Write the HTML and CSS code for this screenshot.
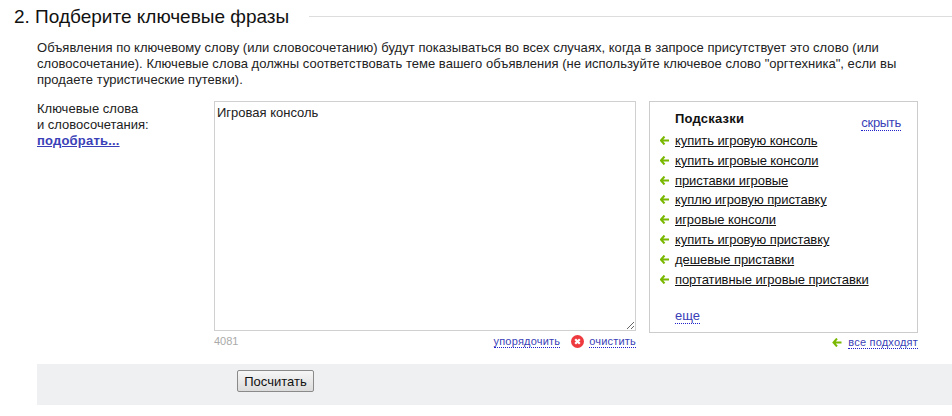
FILE: index.html
```html
<!DOCTYPE html>
<html lang="ru">
<head>
<meta charset="utf-8">
<title>Подберите ключевые фразы</title>
<link rel="stylesheet" href="styles.css">
</head>
<body>
<div class="head">
  <h2 class="title">2. Подберите ключевые фразы</h2>
  <div class="rule"></div>
</div>
<p class="intro">Объявления по ключевому слову (или словосочетанию) будут показываться во всех случаях, когда в запросе присутствует это слово (или словосочетание). Ключевые слова должны соответствовать теме вашего объявления (не используйте ключевое слово "оргтехника", если вы продаете туристические путевки).</p>
<div class="form">
  <div class="label">
    <div>Ключевые слова</div>
    <div>и словосочетания:</div>
    <a class="pick" href="#">подобрать...</a>
  </div>
  <div class="editor">
    <textarea class="area">Игровая консоль</textarea>
    <div class="tools">
      <span class="count">4081</span>
      <a class="dot small" href="#">упорядочить</a>
      <svg class="clear-icon" width="13" height="13" viewBox="0 0 13 13"><circle cx="6.5" cy="6.5" r="6.5" fill="#ee3a3f"/><path d="M4.2 4.2l4.6 4.6M8.8 4.2l-4.6 4.6" stroke="#fff" stroke-width="2.2"/></svg>
      <a class="dot small" href="#">очистить</a>
    </div>
  </div>
  <div class="side">
    <div class="panel">
      <div class="panel-head">
        <b class="panel-title">Подсказки</b>
        <a class="dot hide" href="#">скрыть</a>
      </div>
      <ul class="hints">
        <li><svg class="arrow" width="9" height="9" viewBox="0 0 9 9"><path d="M4.5 0.5L1 4.5l3.5 4M1.5 4.5H9" fill="none" stroke="#7ab800" stroke-width="2"/></svg><a href="#">купить игровую консоль</a></li>
        <li><svg class="arrow" width="9" height="9" viewBox="0 0 9 9"><path d="M4.5 0.5L1 4.5l3.5 4M1.5 4.5H9" fill="none" stroke="#7ab800" stroke-width="2"/></svg><a href="#">купить игровые консоли</a></li>
        <li><svg class="arrow" width="9" height="9" viewBox="0 0 9 9"><path d="M4.5 0.5L1 4.5l3.5 4M1.5 4.5H9" fill="none" stroke="#7ab800" stroke-width="2"/></svg><a href="#">приставки игровые</a></li>
        <li><svg class="arrow" width="9" height="9" viewBox="0 0 9 9"><path d="M4.5 0.5L1 4.5l3.5 4M1.5 4.5H9" fill="none" stroke="#7ab800" stroke-width="2"/></svg><a href="#">куплю игровую приставку</a></li>
        <li><svg class="arrow" width="9" height="9" viewBox="0 0 9 9"><path d="M4.5 0.5L1 4.5l3.5 4M1.5 4.5H9" fill="none" stroke="#7ab800" stroke-width="2"/></svg><a href="#">игровые консоли</a></li>
        <li><svg class="arrow" width="9" height="9" viewBox="0 0 9 9"><path d="M4.5 0.5L1 4.5l3.5 4M1.5 4.5H9" fill="none" stroke="#7ab800" stroke-width="2"/></svg><a href="#">купить игровую приставку</a></li>
        <li><svg class="arrow" width="9" height="9" viewBox="0 0 9 9"><path d="M4.5 0.5L1 4.5l3.5 4M1.5 4.5H9" fill="none" stroke="#7ab800" stroke-width="2"/></svg><a href="#">дешевые приставки</a></li>
        <li><svg class="arrow" width="9" height="9" viewBox="0 0 9 9"><path d="M4.5 0.5L1 4.5l3.5 4M1.5 4.5H9" fill="none" stroke="#7ab800" stroke-width="2"/></svg><a href="#">портативные игровые приставки</a></li>
      </ul>
      <a class="dot more" href="#">еще</a>
    </div>
    <div class="all">
      <svg class="arrow" width="10" height="9" viewBox="0 0 9 9"><path d="M4.5 0.5L1 4.5l3.5 4M1.5 4.5H9" fill="none" stroke="#7ab800" stroke-width="2"/></svg>
      <a class="dot small" href="#">все подходят</a>
    </div>
  </div>
</div>
<div class="bar">
  <button class="calc" type="button">Посчитать</button>
</div>
</body>
</html>
```
FILE: styles.css
```css
* { box-sizing: border-box; }
html, body { margin: 0; padding: 0; background: #fff; }
body {
  width: 952px;
  height: 416px;
  overflow: hidden;
  font-family: "Liberation Sans", Arial, sans-serif;
  font-size: 13px;
  color: #222;
}
.head { display: flex; align-items: center; height: 34px; padding-left: 14px; }
.title { margin: 0; font-size: 19px; font-weight: normal; color: #111; line-height: 34px; white-space: nowrap; }
.rule { flex: 1; height: 1px; margin: -2px 0 0 20px; background: #ddd; }
.intro { margin: 6px 0 0 37px; width: 890px; line-height: 16px; height: 48px; letter-spacing: 0.03px; }
.form { display: flex; margin: 13px 0 0 37px; }
.label { width: 177px; line-height: 16px; }
.pick { font-weight: bold; color: #3a3fb8; letter-spacing: 0.2px; }
.editor { width: 422px; }
.area {
  display: block;
  width: 422px;
  height: 230px;
  padding: 3px 2px;
  border: 1px solid #d0d0d0;
  font: 13px/16px "Liberation Sans", Arial, sans-serif;
  color: #222;
}
.tools { display: flex; align-items: center; height: 18px; margin-top: 1px; }
.count { margin-right: auto; color: #aaa; font-size: 11px; }
a { color: #3a3fb8; }
.dot { text-decoration: none; border-bottom: 1px dotted #2222cc; line-height: 12px; }
.small { font-size: 11px; letter-spacing: 0.2px; }
.clear-icon { margin: 0 5px 0 11px; }
.side { width: 269px; margin-left: 13px; }
.panel { position: relative; height: 232px; border: 1px solid #ccc; padding: 0 16px 0 25px; }
.panel-head { display: flex; justify-content: space-between; height: 29px; }
.panel-title { color: #111; line-height: 33px; font-size: 13px; letter-spacing: 0.2px; }
.hide { align-self: flex-end; height: 15px; line-height: 14px; letter-spacing: -0.3px; }
.hints { list-style: none; margin: 0; padding: 0; }
.hints li { position: relative; height: 19.8px; line-height: 20px; white-space: nowrap; letter-spacing: -0.08px; }
.hints a { color: #111; }
.arrow { display: inline-block; }
.hints .arrow { position: absolute; left: -15px; top: 5px; }
.more { position: absolute; left: 25px; bottom: 8px; line-height: 14px; }
.all { display: flex; justify-content: flex-end; align-items: center; gap: 6px; height: 18px; }
.bar { height: 41px; margin: 13px 0 0 37px; background: #eff0f2; padding: 6px 0 0 200px; }
.calc {
  display: block;
  width: 77px;
  height: 22px;
  padding: 0;
  border: 1px solid #8a8a8a;
  border-radius: 2px;
  background: linear-gradient(#f6f6f6, #dcdcdc);
  font: 13px "Liberation Sans", Arial, sans-serif;
  color: #111;
}
```
